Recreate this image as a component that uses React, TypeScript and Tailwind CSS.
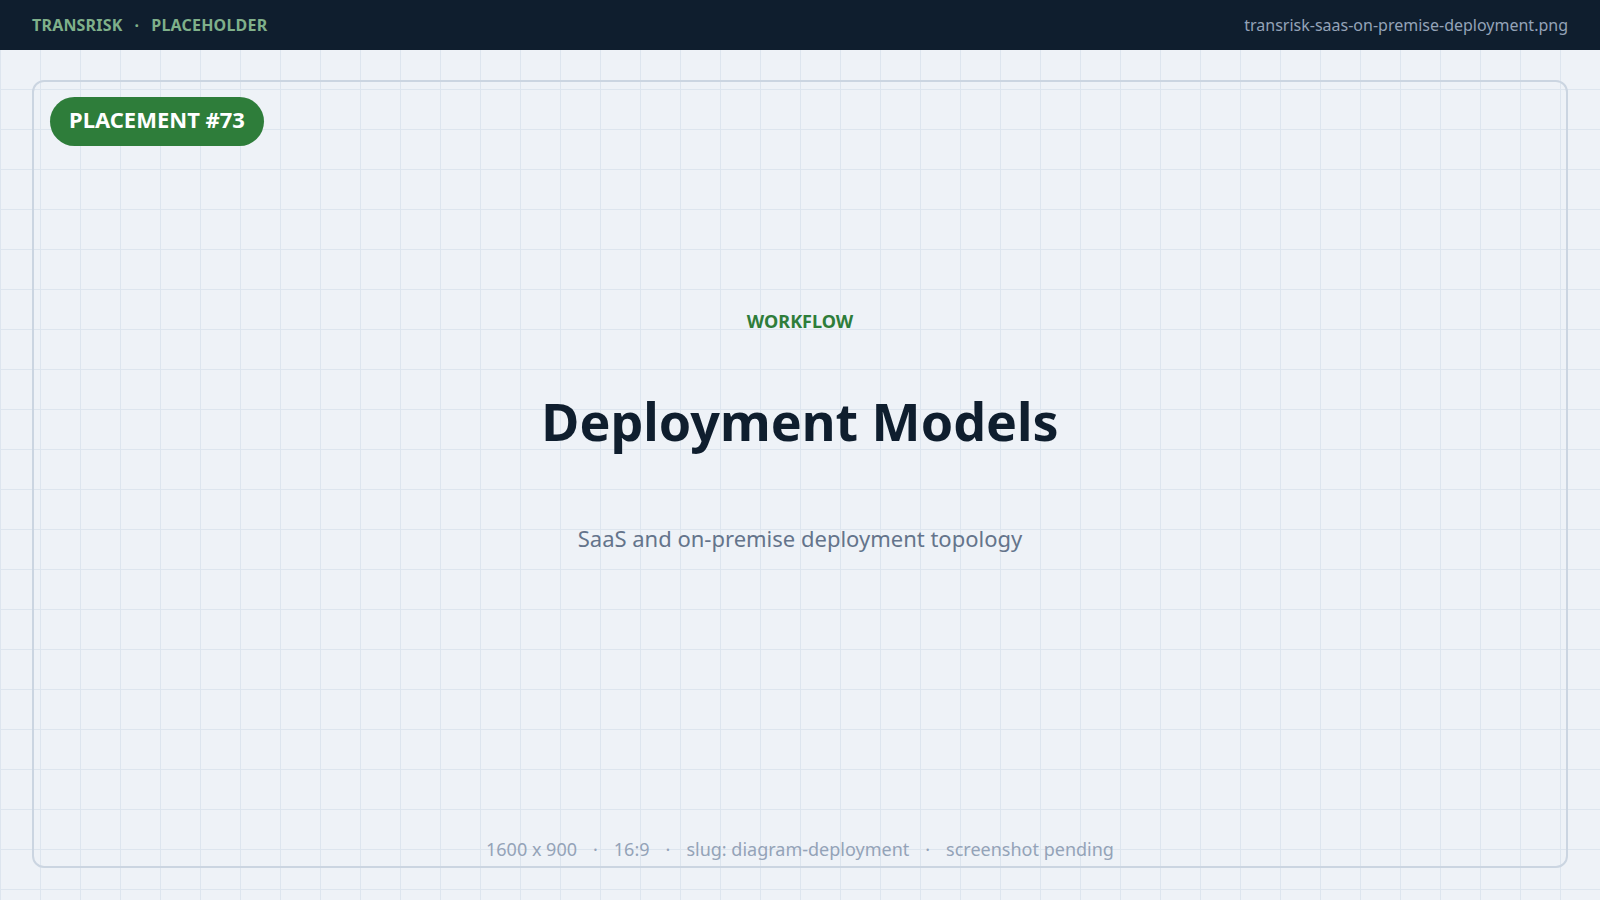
export default function App() {
  return (
    <div className="w-[1600px] h-[900px] flex flex-col bg-[#eef2f7] font-['Liberation_Sans',Arial,sans-serif] overflow-hidden">
      <header className="h-[50px] shrink-0 bg-[#0f1e2e] flex items-center justify-between px-8">
        <div className="text-[16px] font-bold text-[#7fb08a] flex gap-3 tracking-[0.2px]">
          <span>TRANSRISK</span><span>·</span><span>PLACEHOLDER</span>
        </div>
        <div className="text-[16px] text-[#94a3b8]">transrisk-saas-on-premise-deployment.png</div>
      </header>
      <main className="flex-1 px-8 pt-[30px] pb-8 bg-[linear-gradient(to_right,#dde5ee_1px,transparent_1px),linear-gradient(to_bottom,#dde5ee_1px,transparent_1px)] bg-[size:40px_40px] bg-[position:0px_-1px]">
        <div className="h-full border-2 border-[#cbd5e1] rounded-[12px] flex flex-col items-center">
          <div className="self-start ml-[16px] mt-[15px] h-[49px] px-[19px] rounded-full bg-[#2e7d3a] text-white text-[22px] font-bold flex items-center pb-[4px]">PLACEMENT #73</div>
          <div className="mt-[164px] text-[18px] leading-[22px] font-bold text-[#2e7d3a]">WORKFLOW</div>
          <div className="mt-[59px] text-[52px] leading-[60px] font-bold text-[#0f1e2e]">Deployment Models</div>
          <div className="mt-[73px] text-[22px] leading-[28px] text-[#64748b]">SaaS and on-premise deployment topology</div>
          <div className="mt-auto mb-[5px] text-[18px] leading-[24px] text-[#94a3b8] flex gap-[16px]">
            <span>1600 x 900</span><span>·</span><span>16:9</span><span>·</span><span>slug: diagram-deployment</span><span>·</span><span>screenshot pending</span>
          </div>
        </div>
      </main>
    </div>
  );
}
